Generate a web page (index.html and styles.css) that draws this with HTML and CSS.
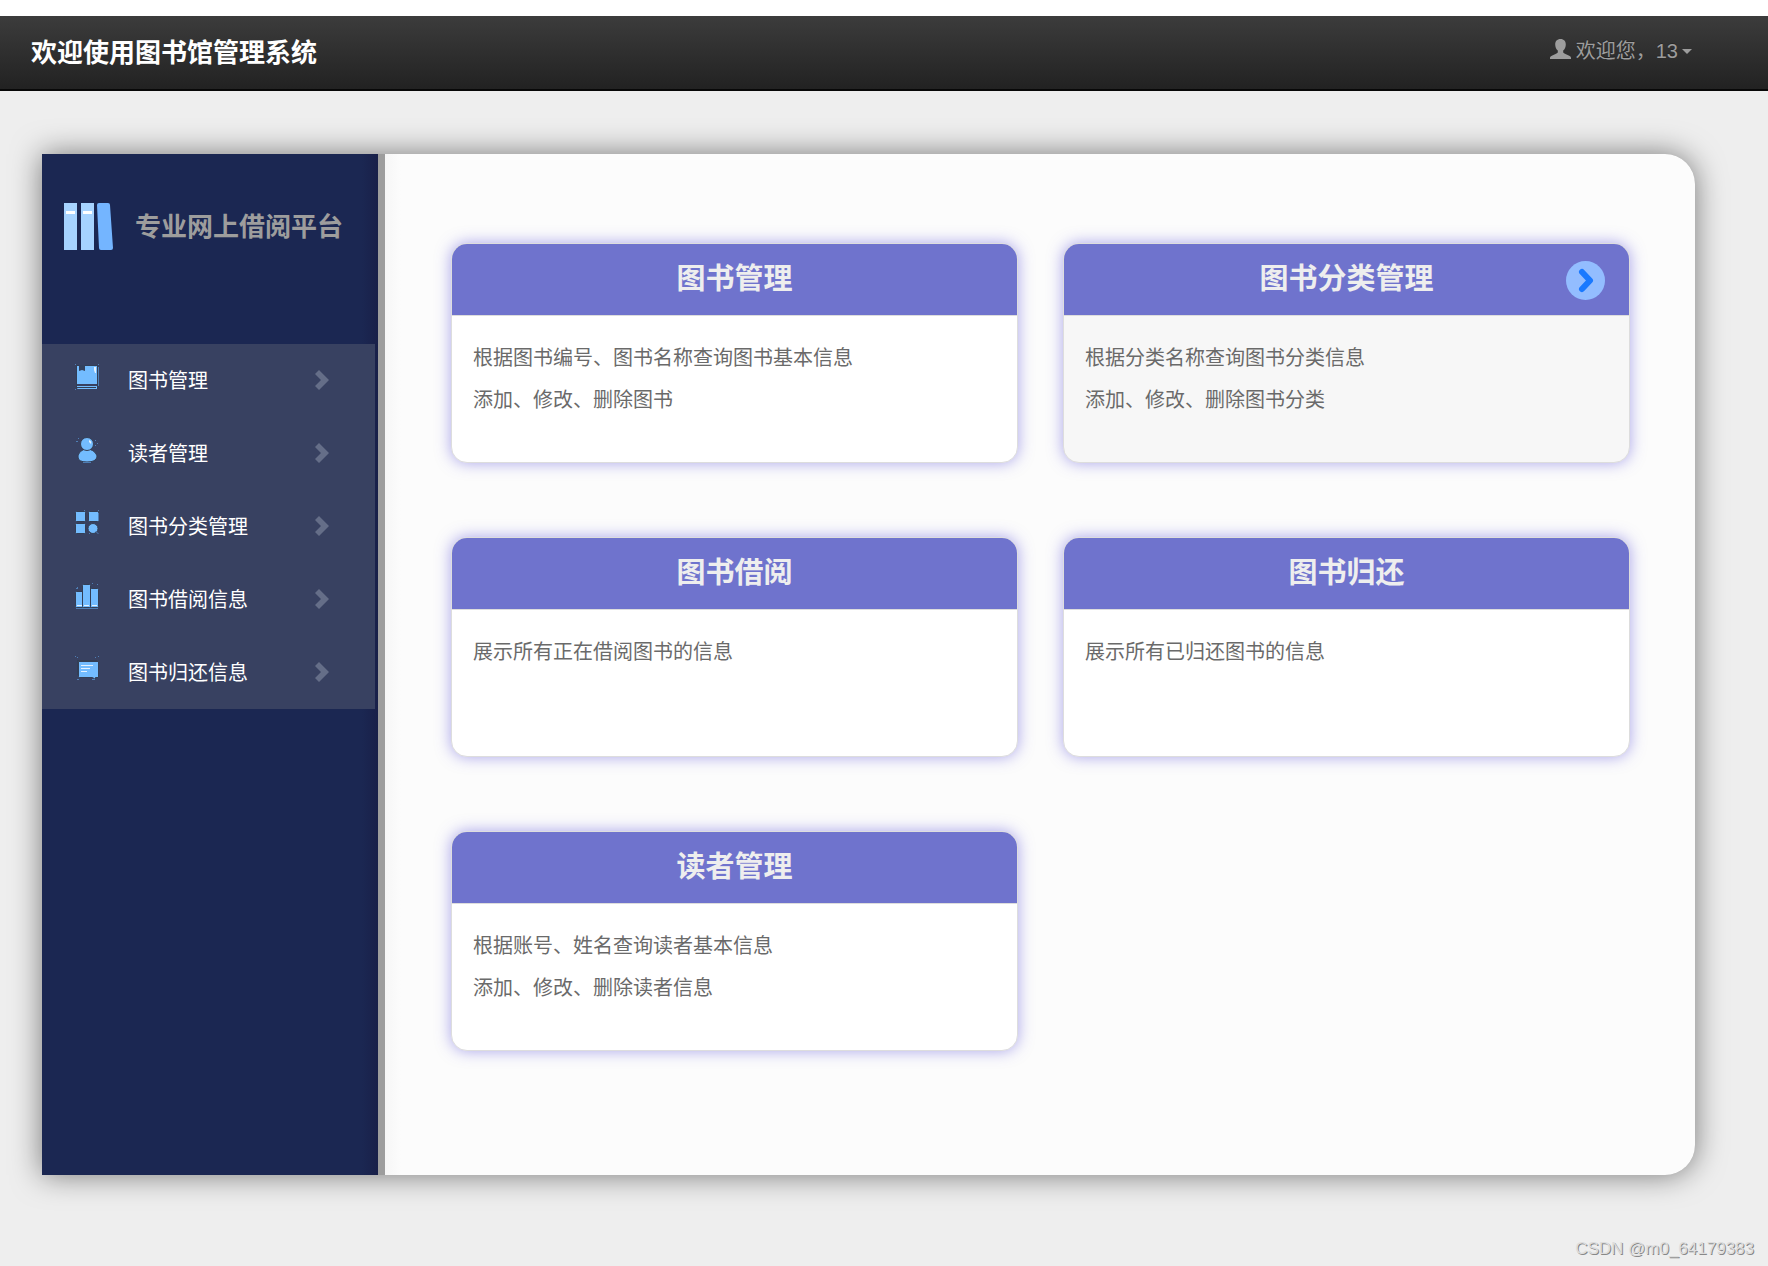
FILE: index.html
```html
<!DOCTYPE html>
<html lang="zh-CN">
<head>
<meta charset="utf-8">
<meta name="viewport" content="width=device-width, initial-scale=1">
<title>图书馆管理系统</title>
<link rel="stylesheet" href="styles.css">
</head>
<body>
<header class="navbar">
  <h1 class="brand">欢迎使用图书馆管理系统</h1>
  <button class="user" type="button">
    <svg class="user-icon" viewBox="0 0 21 20" aria-hidden="true"><path d="M10.500 0C7 0 5.200 2.300 5.200 5.500C5.200 8 6.200 10.300 7.800 11.500V13C7.800 14 7 14.300 5.500 15L1.800 16.700C.5 17.300 0 18 0 19V20H21V19C21 18 20.500 17.300 19.200 16.700L15.500 15C14 14.300 13.200 14 13.200 13V11.500C14.800 10.300 15.800 8 15.800 5.500C15.800 2.300 14 0 10.500 0Z"/></svg>
    <span>欢迎您，13</span>
    <span class="caret"></span>
  </button>
</header>

<div class="panel">
  <aside class="sidebar">
    <div class="logo">
      <svg class="logo-icon" viewBox="0 0 50 48" aria-hidden="true">
        <path fill="#a6d3ff" d="M1 0h13v47H1zM18 0h13v47H18z"/>
        <path fill="#fff" d="M3 8h9v3H3zM20 8h9v3h-9z"/>
        <path fill="#74b5ff" d="M36 0h9q2 0 2 2l3 43q0 2-2 2h-10q-2 0-2-2L34 2q0-2 2-2z"/>
      </svg>
      <h2 class="logo-text">专业网上借阅平台</h2>
    </div>
    <nav class="menu">
      <a class="menu-item" href="#books">
        <svg class="menu-icon" viewBox="0 0 26 28" aria-hidden="true">
          <path fill="none" stroke="#333e55" d="M2.500 2.500h21v23h-21z"/>
          <path fill="#73bcff" d="M3 3h20v18H3zM3 23h20v3H4q-1 0-1-1z"/>
          <path fill="#34405c" d="M5 2h6v6L8 7 5 8z"/><path fill="#333e55" d="M3 24h19v1H3z"/>
          <path fill="#e4f2ff" d="M20 4h2v6h-1l-1-3z"/>
          <path fill="#4f7eb4" d="M1 1h1v1H1zM24 1h1v1h-1zM1 26h1v1H1zM24 4h1v19h-1z"/>
        </svg>
        <span class="menu-label">图书管理</span>
        <svg class="chevron" viewBox="0 0 14 20" aria-hidden="true"><path d="M4 0 14 10 4 20 0 16 6 10 0 4z"/></svg>
      </a>
      <a class="menu-item" href="#readers">
        <svg class="menu-icon" viewBox="0 0 26 28" aria-hidden="true">
          <path fill="#73bcff" stroke="#333e55" d="M13 13c-5 0-9 4-9 8q0 5 9 5t10-5c0-4-5-8-10-8z"/>
          <circle cx="13" cy="8" r="6.500" fill="#73bcff" stroke="#333e55"/>
          <path fill="#e4f2ff" d="M15 4q3 1 2 4l-2-2z"/>
          <path fill="#4f7eb4" d="M4 2h1v1H4zM2 5h2v1H2zM21 4h1v1h-1zM23 7h1v1h-1zM21 9h1v1h-1zM9 26h8v1H9z"/>
        </svg>
        <span class="menu-label">读者管理</span>
        <svg class="chevron" viewBox="0 0 14 20" aria-hidden="true"><path d="M4 0 14 10 4 20 0 16 6 10 0 4z"/></svg>
      </a>
      <a class="menu-item" href="#categories">
        <svg class="menu-icon" viewBox="0 0 26 28" aria-hidden="true">
          <g fill="#73bcff" stroke="#333e55"><rect x="1.500" y="2.500" width="10" height="10" rx="1"/><rect x="14.500" y="2.500" width="10" height="10" rx="1"/><rect x="1.500" y="14.500" width="10" height="10" rx="1"/><circle cx="19" cy="19.500" r="5"/></g>
          <path fill="#4f7eb4" d="M10 1h1v1h-1zM24 1h1v1h-1zM24 4h1v8h-1zM22 22l3 3h-1l-3-3zM15 24h1v1h-1z"/>
        </svg>
        <span class="menu-label">图书分类管理</span>
        <svg class="chevron" viewBox="0 0 14 20" aria-hidden="true"><path d="M4 0 14 10 4 20 0 16 6 10 0 4z"/></svg>
      </a>
      <a class="menu-item" href="#loans">
        <svg class="menu-icon" viewBox="0 0 26 28" aria-hidden="true">
          <g fill="#73bcff" stroke="#333e55"><rect x="1.500" y="9.500" width="8" height="16" rx="1"/><rect x="16.500" y="6.500" width="8" height="19" rx="1"/><rect x="8.500" y="2.500" width="8" height="23" rx="1"/></g>
          <path fill="#e4f2ff" d="M3 23h5v1H3zM10 23h5v1h-5zM18 23h5v1h-5z"/>
          <path fill="#4f7eb4" d="M3 5h1v1H3zM2 6h2v1H2zM18 1h1v1h-1zM23 2h1v1h-1zM2 26h22v1H2z"/>
        </svg>
        <span class="menu-label">图书借阅信息</span>
        <svg class="chevron" viewBox="0 0 14 20" aria-hidden="true"><path d="M4 0 14 10 4 20 0 16 6 10 0 4z"/></svg>
      </a>
      <a class="menu-item" href="#returns">
        <svg class="menu-icon" viewBox="0 0 26 28" aria-hidden="true">
          <path fill="#73bcff" stroke="#333e55" d="M4.500 6.500h20v16h-3v2l-3-2h-13q-1 0-1-1z"/>
          <path fill="#333e55" d="M3 5h20v1H4v14H3z"/>
          <path fill="#e4f2ff" d="M7 10h12v1H7zM7 13h9v1H7zM7 16h6v1H7z"/>
          <path fill="#4f7eb4" d="M1 1h1v1H1zM3 2h1v1H3zM21 2h1v1h-1zM24 1h1v1h-1zM3 24h2v1H3zM18 24h3v1h-3z"/>
        </svg>
        <span class="menu-label">图书归还信息</span>
        <svg class="chevron" viewBox="0 0 14 20" aria-hidden="true"><path d="M4 0 14 10 4 20 0 16 6 10 0 4z"/></svg>
      </a>
    </nav>
  </aside>

  <main class="content">
    <section class="card">
      <h3 class="card-title">图书管理</h3>
      <div class="card-body"><p>根据图书编号、图书名称查询图书基本信息</p><p>添加、修改、删除图书</p></div>
    </section>
    <section class="card card-active">
      <h3 class="card-title">图书分类管理</h3>
      <a class="card-go" href="#categories" aria-label="进入图书分类管理">
        <svg viewBox="0 0 39 39" aria-hidden="true"><circle cx="19.500" cy="19.500" r="19.500" fill="#93bdff"/><path fill="none" stroke="#1979ff" stroke-width="6" stroke-linecap="round" stroke-linejoin="round" d="M16 11 24 19.500 16 28"/></svg>
      </a>
      <div class="card-body"><p>根据分类名称查询图书分类信息</p><p>添加、修改、删除图书分类</p></div>
    </section>
    <section class="card">
      <h3 class="card-title">图书借阅</h3>
      <div class="card-body"><p>展示所有正在借阅图书的信息</p></div>
    </section>
    <section class="card">
      <h3 class="card-title">图书归还</h3>
      <div class="card-body"><p>展示所有已归还图书的信息</p></div>
    </section>
    <section class="card">
      <h3 class="card-title">读者管理</h3>
      <div class="card-body"><p>根据账号、姓名查询读者基本信息</p><p>添加、修改、删除读者信息</p></div>
    </section>
  </main>
</div>

<footer class="credit">CSDN @m0_64179383</footer>
</body>
</html>
```
FILE: styles.css
```css
* {
  box-sizing: border-box;
}

body {
  margin: 0;
  min-height: 100vh;
  display: flex;
  flex-direction: column;
  border-top: 16px solid #fff;
  background: #eee;
  font-family: "Liberation Sans", "Noto Sans CJK SC", sans-serif;
  font-size: 20px;
}

h1, h2, h3, p {
  margin: 0;
}

a {
  color: inherit;
  text-decoration: none;
}

svg {
  display: block;
}

.navbar {
  display: flex;
  align-items: flex-start;
  justify-content: space-between;
  height: 75px;
  padding: 16px 76px 0 31px;
  background: linear-gradient(#3c3c3c, #222);
  border-bottom: 2px solid #080808;
}

.brand {
  color: #fff;
  font-size: 26px;
  line-height: 42px;
}

.user {
  display: flex;
  align-items: center;
  padding: 0;
  border: 0;
  background: none;
  color: #9d9d9d;
  font: inherit;
  line-height: 38px;
  text-shadow: 0 -1px 0 rgba(0, 0, 0, .25);
}

.user-icon {
  width: 21px;
  height: 20px;
  margin: 0 5px 4px 0;
  fill: #9d9d9d;
}

.caret {
  margin-left: 4px;
  border: 5px solid transparent;
  border-top-color: #9d9d9d;
  border-bottom: 0;
}

.panel {
  display: flex;
  gap: 7px;
  margin: 63px 73px 0 42px;
  border-radius: 0 30px 30px 0;
  background: #9d9d9d;
  box-shadow: 0 0 30px rgba(0, 0, 0, .5);
}

.sidebar {
  flex: 0 0 336px;
  background: linear-gradient(to left, #192049, #1b2752 16px);
}

.logo {
  display: flex;
  align-items: center;
  gap: 22px;
  height: 190px;
  padding: 0 0 44px 21px;
}

.logo-icon {
  width: 50px;
  height: 48px;
}

.logo-text {
  color: #9d9d9d;
  font-size: 26px;
  line-height: 40px;
}

.menu {
  margin-right: 3px;
  background: #384161;
}

.menu-item {
  display: flex;
  align-items: center;
  height: 73px;
  padding: 0 46px 2px 32px;
  color: #fff;
}

.menu-icon {
  width: 26px;
  height: 28px;
  margin-bottom: 6px;
}

.menu-label {
  flex: 1;
  padding-left: 28px;
}

.chevron {
  width: 14px;
  height: 20px;
  fill: #656e88;
}

.content {
  flex: 1;
  display: grid;
  grid-template-columns: 1fr 1fr;
  gap: 74px 45px;
  padding: 89px 65px 124px 66px;
  border-radius: 0 30px 30px 0;
  background: linear-gradient(to right, #f6f6f6, #fcfcfc 16px);
}

.card {
  position: relative;
  min-height: 220px;
  border: 1px solid #ddd;
  border-radius: 16px;
  background: #fff;
  box-shadow: 0 0 15px rgba(90, 80, 220, .5);
  overflow: hidden;
}

.card-active {
  background: #f7f7f7;
}

.card-title {
  height: 72px;
  border-bottom: 1px solid #ddd;
  background: #6f73cd;
  color: #eee;
  font-size: 29px;
  line-height: 70px;
  text-align: center;
}

.card-go {
  position: absolute;
  top: 17px;
  right: 24px;
  width: 39px;
  height: 39px;
}

.card-body {
  padding: 21px;
  color: #6a6a6a;
  line-height: 42px;
}

.credit {
  margin-top: auto;
  padding: 0 14px 7px;
  color: #ddd;
  font-size: 17px;
  line-height: 20px;
  text-align: right;
  text-shadow: 1px 1px 0 #888;
}
```
